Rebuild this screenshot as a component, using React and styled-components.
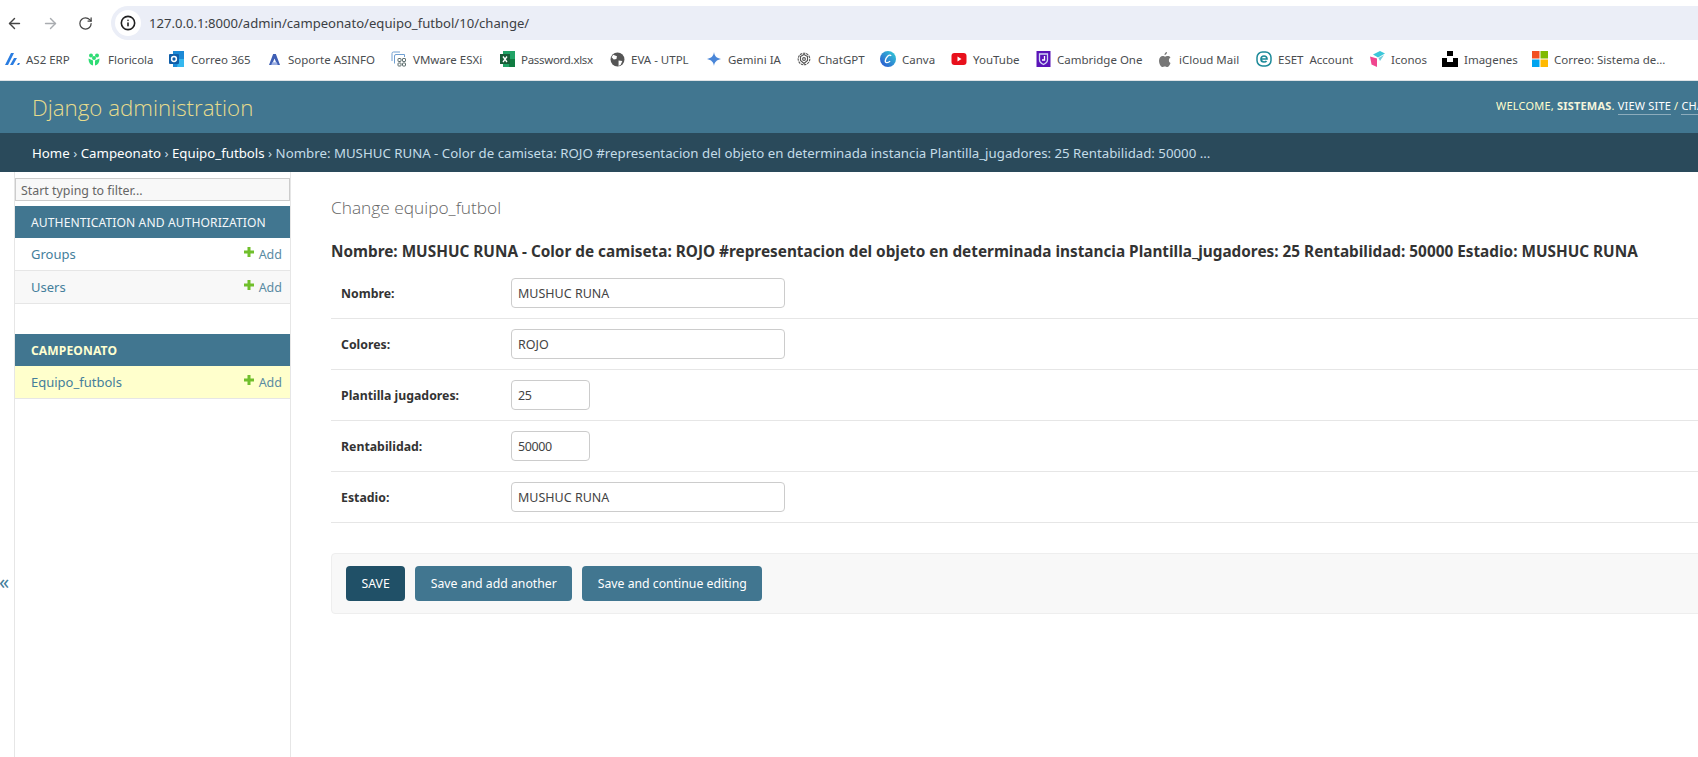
import React from "react";
import styled, { createGlobalStyle } from "styled-components";
import { ArrowLeft, ArrowRight, RotateCw, Info } from "lucide-react";

const GlobalStyle = createGlobalStyle`
  html, body { margin: 0; padding: 0; height: 100%; overflow: hidden; background: #fff; }
  body { font-family: "Noto Sans", "Open Sans", sans-serif; color: #333; }
  * { box-sizing: border-box; }
`;

const Page = styled.div`
  width: 1698px;
  height: 757px;
  display: flex;
  flex-direction: column;
  overflow: hidden;
`;

/* browser chrome */
const Toolbar = styled.div`
  height: 40px;
  flex: none;
  display: flex;
  align-items: flex-end;
  padding-left: 6px;
  background: #fff;
`;

const NavButtons = styled.div`
  height: 34px;
  width: 105px;
  display: flex;
  align-items: center;
  gap: 19px;
  svg { display: block; }
`;

const UrlBar = styled.div`
  flex: 1;
  height: 34px;
  margin-right: -20px;
  display: flex;
  align-items: center;
  gap: 8px;
  padding-left: 4px;
  background: #ebeef7;
  border-radius: 17px;
  font-size: 13.1px;
  color: #3c3f44;
`;

const SiteInfo = styled.span`
  width: 26px;
  height: 26px;
  border-radius: 50%;
  background: #fff;
  display: flex;
  align-items: center;
  justify-content: center;
  color: #1f1f1f;
`;

const Bookmarks = styled.div`
  height: 41px;
  flex: none;
  display: flex;
  align-items: center;
  gap: 17px;
  padding: 0 0 2px 4px;
  background: #fff;
  border-bottom: 1px solid #dfe3e6;
`;

const Bookmark = styled.span`
  display: flex;
  align-items: center;
  gap: 6px;
  font-size: 11.5px;
  color: #4a4d50;
`;

const IconBox = styled.span`
  width: 16px;
  height: 16px;
  flex: none;
  display: flex;
  align-items: center;
  justify-content: center;
  svg { display: block; }
`;

const BookmarkName = styled.span`
  width: ${({ $w }) => $w}px;
  white-space: pre;
  letter-spacing: ${({ $ls }) => $ls || 0}px;
`;

/* django header */
const Header = styled.header`
  height: 52px;
  flex: none;
  display: flex;
  align-items: center;
  justify-content: space-between;
  padding-left: 32px;
  background: #417690;
  overflow: hidden;
`;

const Branding = styled.h1`
  margin: 0;
  font-family: "Open Sans", sans-serif;
  font-size: 22.3px;
  font-weight: 300;
  color: #e8dc8c;
`;

const UserTools = styled.div`
  flex: none;
  width: 202px;
  overflow: hidden;
  white-space: nowrap;
  font-size: 11px;
  letter-spacing: 0.2px;
  line-height: 18px;
  color: #ffc;
  text-transform: uppercase;
  margin-top: -2px;
  strong { font-weight: 700; color: #f5f5dc; }
`;

const ToolLink = styled.a`
  color: #fff;
  padding-bottom: 1px;
  border-bottom: 1px solid rgba(255, 255, 255, 0.4);
`;

const Breadcrumbs = styled.nav`
  height: 39px;
  flex: none;
  display: flex;
  align-items: center;
  padding-left: 32px;
  background: #2a4a5b;
  color: #c4dce8;
  font-size: 13.25px;
  white-space: nowrap;
`;

const Crumb = styled.a`
  color: #fff;
`;

const Body = styled.div`
  flex: 1;
  min-height: 0;
  display: flex;
`;

/* sidebar */
const Toggle = styled.div`
  width: 15px;
  flex: none;
  display: flex;
  align-items: center;
  padding-top: 234px;
  border-right: 1px solid #e6e6e6;
  color: #447e9b;
  font-size: 20px;
  line-height: 1;
  span { margin-left: -1px; }
`;

const Sidebar = styled.aside`
  width: 276px;
  flex: none;
  padding-top: 6px;
  border-right: 1px solid #e6e6e6;
`;

const Filter = styled.input`
  display: block;
  width: 100%;
  height: 23px;
  margin-bottom: 5px;
  padding: 1px 5px 0;
  font: 12.4px "Noto Sans", sans-serif;
  color: #555;
  background: #f8f8f8;
  border: 1px solid #ccc;
  outline: none;
  &::placeholder { color: #666; opacity: 1; }
`;

const ModuleGroup = styled.section`
  margin-bottom: 30px;
`;

const Caption = styled.div`
  height: 32px;
  display: flex;
  align-items: center;
  padding-left: 16px;
  background: #417690;
  font-size: 12.1px;
  font-weight: ${({ $active }) => ($active ? 700 : 400)};
  color: ${({ $active }) => ($active ? "#ffffd0" : "#f4f8fa")};
  letter-spacing: 0.1px;
`;

const ModuleRow = styled.div`
  height: 33px;
  display: flex;
  align-items: center;
  justify-content: space-between;
  padding: 0 8px 1px 16px;
  font-size: 13px;
  color: #447e9b;
  background: ${({ $bg }) => $bg};
  border-bottom: 1px solid #e6e6e6;
`;

const AddLink = styled.span`
  display: flex;
  align-items: center;
  gap: 5px;
  margin-top: 1px;
  font-size: 12.5px;
  color: #5a8ba3;
  svg { display: block; margin-top: -4px; }
`;

/* main content */
const Main = styled.main`
  flex: 1;
  min-width: 0;
  padding: 22px 0 0 40px;
  white-space: nowrap;
`;

const Title = styled.h1`
  margin: 0 0 18px;
  font-family: "Open Sans", sans-serif;
  font-size: 17.3px;
  line-height: 28px;
  font-weight: 300;
  color: #666;
`;

const ObjectName = styled.h2`
  margin: 0 0 6px;
  font-size: 15.33px;
  line-height: 22px;
  font-weight: 700;
  color: #333;
`;

const Row = styled.div`
  height: 51px;
  display: flex;
  align-items: center;
  padding: 0 0 0 10px;
  border-bottom: 1px solid #e6e6e6;
  width: 1400px;
`;

const Label = styled.label`
  width: 170px;
  flex: none;
  font-size: 12.3px;
  font-weight: 700;
  color: #333;
`;

const Field = styled.input`
  width: ${({ $w }) => $w}px;
  height: 30px;
  padding: 0 6px;
  font: 12.5px "Noto Sans", sans-serif;
  letter-spacing: ${({ $w }) => ($w < 100 ? "-0.4px" : "0")};
  color: #444;
  background: #fff;
  border: 1px solid #ccc;
  border-radius: 4px;
  outline: none;
`;

const SubmitRow = styled.div`
  width: 1400px;
  height: 61px;
  margin-top: 30px;
  display: flex;
  align-items: center;
  gap: 10px;
  padding-left: 14px;
  background: #f8f8f8;
  border: 1px solid #eee;
  border-radius: 4px;
`;

const Button = styled.button`
  height: 35px;
  padding: 0 15.5px;
  font: 12.25px "Noto Sans", sans-serif;
  color: #fff;
  background: ${({ $default }) => ($default ? "#205067" : "#417690")};
  border: none;
  border-radius: 4px;
`;

/* bookmark icons */
const AsIcon = () => (
  <svg width="15" height="14" viewBox="0 0 15 14"><path d="M0 13 6 1h3L3 13zM5 13 9 6h3l-4 7zM12 13l1-2h2l-1 2z" fill="#2a7de1" /></svg>
);
const LeafIcon = () => (
  <svg width="14" height="14" viewBox="0 0 14 14" fill="#2fdc74"><circle cx="4" cy="3.500" r="2" /><circle cx="10" cy="3.500" r="2" /><circle cx="7" cy="6" r="2" /><path d="M1.500 6.500 6 8.500v5C3 13 1.500 10.500 1.500 6.500zM12.500 6.500 8 8.500v5c3-.5 4.500-3 4.500-7z" /></svg>
);
const OutlookIcon = () => (
  <svg width="16" height="16" viewBox="0 0 16 16"><rect x="4" y="0" width="11" height="16" fill="#1c8ad6" /><path d="M10 8h5v8H8z" fill="#35b8ef" /><rect x="0" y="3" width="10" height="10" rx="1" fill="#0f5ea8" /><circle cx="5" cy="8" r="2.400" fill="none" stroke="#fff" strokeWidth="1.500" /></svg>
);
const AsinfoIcon = () => (
  <svg width="11" height="11" viewBox="0 0 12 12"><path d="M4.500 0h3L12 12H9L6 5 3 12H0z" fill="#3f5fb5" /><path d="M3.500 9h5l1 3h-7z" fill="#9db0e3" /></svg>
);
const VmwareIcon = () => (
  <svg width="16" height="16" viewBox="0 0 16 16" fill="none" stroke="#6f9fd2" strokeWidth="1"><path d="M1 10V2.500A1.500 1.500 0 0 1 2.500 1H9" /><path d="M3.500 12.500V5A1.500 1.500 0 0 1 5 3.500h8.500V6" /><rect x="7" y="7.500" width="3" height="3" rx=".6" stroke="#566" /><rect x="11.500" y="7.500" width="3" height="3" rx=".6" stroke="#566" /><rect x="7" y="12" width="3" height="3" rx=".6" stroke="#566" /><rect x="11.500" y="12" width="3" height="3" rx=".6" stroke="#566" /></svg>
);
const ExcelIcon = () => (
  <svg width="15" height="16" viewBox="0 0 15 16"><rect x="3" y="0" width="12" height="16" fill="#21a366" /><rect x="9" y="8" width="6" height="8" fill="#107c41" /><rect x="0" y="3" width="10" height="10" fill="#185c37" /><path d="m3 5.500 4 5.500M7 5.500 3 11" stroke="#fff" strokeWidth="1.300" /></svg>
);
const GlobeIcon = () => (
  <svg width="15" height="15" viewBox="0 0 14 14"><circle cx="7" cy="7" r="6.500" fill="#555" /><path d="M3 2.500 6.500 4 6 6.500 3.500 7 1.500 5zM8 8l3.500.5L10 12 8 13z" fill="#fff" /></svg>
);
const GeminiIcon = () => (
  <svg width="14" height="14" viewBox="0 0 14 14"><path d="M7 0c.6 4 2.500 6 7 7-4.500 1-6.400 3-7 7-.6-4-2.500-6-7-7 4.500-1 6.400-3 7-7z" fill="#4a86d8" /></svg>
);
const GptIcon = () => (
  <svg width="14" height="14" viewBox="0 0 14 14" fill="none" stroke="#555" strokeWidth="1.100"><circle cx="7" cy="7" r="5.800" strokeDasharray="2.400 .8" /><path d="M7 2.500 10.500 4.500v4L7 11.500 3.500 8.500v-4z" /><circle cx="7" cy="7" r="1.400" /></svg>
);
const CanvaIcon = () => (
  <svg width="16" height="16" viewBox="0 0 15 15"><defs><linearGradient id="cv" x1="0" y1="1" x2="1" y2="0"><stop offset="0" stopColor="#2a4fd0" /><stop offset="1" stopColor="#33d0d6" /></linearGradient></defs><circle cx="7.500" cy="7.500" r="7.500" fill="url(#cv)" /><path d="M10.500 4.500C8.500 2.500 5.500 6 5 9c-.4 2.500 2.500 2.500 4.500.5" fill="none" stroke="#fff" strokeWidth="1.300" /></svg>
);
const YoutubeIcon = () => (
  <svg width="16" height="12" viewBox="0 0 15 12"><rect width="15" height="12" rx="3" fill="#e8101c" /><path d="M6 3.500v5l4-2.500z" fill="#fff" /></svg>
);
const CambridgeIcon = () => (
  <svg width="15" height="16" viewBox="0 0 14 16"><rect width="14" height="16" fill="#5a14b8" /><path d="M3 3h8v6c0 2.500-2 3.500-4 4.500C5 12.500 3 11.500 3 9z" fill="none" stroke="#cfd6f5" strokeWidth="1.300" /><path d="M8 5v4H5.500" fill="none" stroke="#fff" strokeWidth="1.300" /></svg>
);
const AppleIcon = () => (
  <svg width="12" height="15" viewBox="0 0 12 15"><path d="M8 0c.1 1.500-1 3-2.500 3C5.400 1.500 6.500.2 8 0zM11.500 11c-.7 1.800-1.900 4-3.200 4-1 0-1.300-.6-2.500-.6S4.300 15 3.400 15C1.800 15 0 11.700 0 8.800 0 5.800 1.900 4 3.700 4c1 0 1.800.7 2.400.7S7.500 4 8.800 4c.8 0 2 .4 2.700 1.500-2.200 1.300-2 4.500 0 5.500z" fill="#777" /></svg>
);
const EsetIcon = () => (
  <svg width="16" height="16" viewBox="0 0 16 16"><rect x="1" y="1" width="14" height="14" rx="5.500" fill="#fff" stroke="#1d8a99" strokeWidth="1.500" /><path d="M5 8h6c0-2-1.200-3-3-3S5 6.200 5 8s1.300 3 3 3c1 0 2-.3 2.500-1" fill="none" stroke="#1d8a99" strokeWidth="1.700" /></svg>
);
const CubeIcon = () => (
  <svg width="15" height="16" viewBox="0 0 15 16"><path d="M0 5.500 7 7.500V16L1.500 13.500z" fill="#f0468f" /><path d="M3 3.500 10 0l5 2.500-7 4z" fill="#3cc7d9" /><path d="M8.500 7 14 4l-4 6z" fill="#36b6cc" opacity=".7" /></svg>
);
const UnsplashIcon = () => (
  <svg width="16" height="16" viewBox="0 0 16 16" fill="#000"><rect x="5" y="0" width="6" height="5" /><path d="M0 7h5v4h6V7h5v9H0z" /></svg>
);
const MsIcon = () => (
  <svg width="16" height="16" viewBox="0 0 16 16"><rect width="7.500" height="7.500" fill="#f25022" /><rect x="8.500" width="7.500" height="7.500" fill="#7fba00" /><rect y="8.500" width="7.500" height="7.500" fill="#00a4ef" /><rect x="8.500" y="8.500" width="7.500" height="7.500" fill="#ffb900" /></svg>
);
const PlusIcon = () => (
  <svg width="10" height="10" viewBox="0 0 10 10"><path d="M3.500 0h3v3.500H10v3H6.500V10h-3V6.500H0v-3h3.500z" fill="#70bf2b" /></svg>
);

// icon, name, measured text width, letter spacing
const bookmarks = [
  [AsIcon, "AS2 ERP", 43],
  [LeafIcon, "Floricola", 44],
  [OutlookIcon, "Correo 365", 58],
  [AsinfoIcon, "Soporte ASINFO", 86],
  [VmwareIcon, "VMware ESXi", 69],
  [ExcelIcon, "Password.xlsx", 71, -0.3],
  [GlobeIcon, "EVA - UTPL", 58],
  [GeminiIcon, "Gemini IA", 51],
  [GptIcon, "ChatGPT", 45],
  [CanvaIcon, "Canva", 32],
  [YoutubeIcon, "YouTube", 45],
  [CambridgeIcon, "Cambridge One", 83],
  [AppleIcon, "iCloud Mail", 60],
  [EsetIcon, "ESET  Account", 74],
  [CubeIcon, "Iconos", 34],
  [UnsplashIcon, "Imagenes", 51],
  [MsIcon, "Correo: Sistema de...", 108],
];

const fields = [
  ["Nombre:", "MUSHUC RUNA", 274],
  ["Colores:", "ROJO", 274],
  ["Plantilla jugadores:", "25", 79],
  ["Rentabilidad:", "50000", 79],
  ["Estadio:", "MUSHUC RUNA", 274],
];

const App = () => (
  <Page>
    <GlobalStyle />
    <Toolbar>
      <NavButtons>
        <ArrowLeft size={17} color="#444" />
        <ArrowRight size={17} color="#a9acb0" />
        <RotateCw size={15} color="#444" />
      </NavButtons>
      <UrlBar>
        <SiteInfo><Info size={16} strokeWidth={2.4} /></SiteInfo>
        127.0.0.1:8000/admin/campeonato/equipo_futbol/10/change/
      </UrlBar>
    </Toolbar>
    <Bookmarks>
      {bookmarks.map(([Icon, name, width, spacing]) => (
        <Bookmark key={name}>
          <IconBox><Icon /></IconBox>
          <BookmarkName $w={width} $ls={spacing}>{name}</BookmarkName>
        </Bookmark>
      ))}
    </Bookmarks>
    <Header>
      <Branding>Django administration</Branding>
      <UserTools>
        Welcome, <strong>sistemas</strong>. <ToolLink>View site</ToolLink> / <ToolLink>Change password</ToolLink>
      </UserTools>
    </Header>
    <Breadcrumbs>
      <Crumb>Home</Crumb>&nbsp;›&nbsp;<Crumb>Campeonato</Crumb>&nbsp;›&nbsp;<Crumb>Equipo_futbols</Crumb>&nbsp;›&nbsp;Nombre: MUSHUC RUNA - Color de camiseta: ROJO #representacion del objeto en determinada instancia Plantilla_jugadores: 25 Rentabilidad: 50000 ...
    </Breadcrumbs>
    <Body>
      <Toggle><span>«</span></Toggle>
      <Sidebar>
        <Filter placeholder="Start typing to filter..." />
        <ModuleGroup>
          <Caption>AUTHENTICATION AND AUTHORIZATION</Caption>
          <ModuleRow $bg="#fff">Groups<AddLink><PlusIcon />Add</AddLink></ModuleRow>
          <ModuleRow $bg="#f8f8f8">Users<AddLink><PlusIcon />Add</AddLink></ModuleRow>
        </ModuleGroup>
        <ModuleGroup>
          <Caption $active>CAMPEONATO</Caption>
          <ModuleRow $bg="#ffffcc">Equipo_futbols<AddLink><PlusIcon />Add</AddLink></ModuleRow>
        </ModuleGroup>
      </Sidebar>
      <Main>
        <Title>Change equipo_futbol</Title>
        <ObjectName>Nombre: MUSHUC RUNA - Color de camiseta: ROJO #representacion del objeto en determinada instancia Plantilla_jugadores: 25 Rentabilidad: 50000 Estadio: MUSHUC RUNA</ObjectName>
        {fields.map(([label, value, width]) => (
          <Row key={label}>
            <Label>{label}</Label>
            <Field $w={width} defaultValue={value} />
          </Row>
        ))}
        <SubmitRow>
          <Button $default>SAVE</Button>
          <Button>Save and add another</Button>
          <Button>Save and continue editing</Button>
        </SubmitRow>
      </Main>
    </Body>
  </Page>
);

export default App;
